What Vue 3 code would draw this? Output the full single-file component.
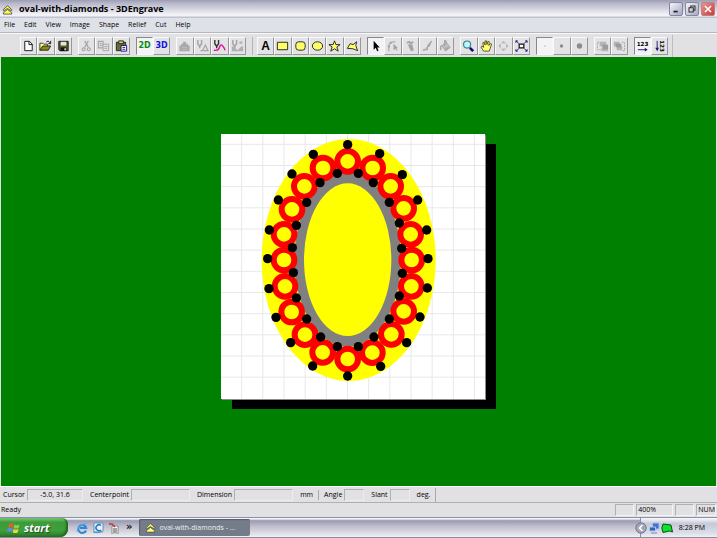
<script setup>
const menus = ['File', 'Edit', 'View', 'Image', 'Shape', 'Relief', 'Cut', 'Help']

const grayShape = 'fill="none" stroke="#a3a3a5" stroke-width="1.2"'
const probe = (c) => `<path d="M3 1v4l2 3l2-3V1M5 7v3" fill="none" stroke="${c}" stroke-width="1.5"/>`
const shape = 'fill="#ffff66" stroke="#222" stroke-width="1"'

const groups = [
  {
    size: 'w3',
    tools: [
      { label: 'New', icon: '<path d="M4 2.500h5l3 3v7H4z" fill="#fff" stroke="#111"/><path d="M8.500 2.500v3.500H12" fill="none" stroke="#111"/>' },
      { label: 'Open', icon: '<path d="M2 12V4.500h3l1 1h4V8" fill="#ffff80" stroke="#333"/><path d="M2 12l3-4.500h8.500L11 12z" fill="#8b8b10" stroke="#222"/><path d="M9 3q2-2 3.500 1M13.500 2v3h-2.500" fill="none" stroke="#111"/>' },
      { label: 'Save', icon: '<path d="M3 2.500h10v10H4l-1-1z" fill="#5c5c28" stroke="#111"/><path d="M5 3h6v4H5z" fill="#e4e4e4"/><path d="M5 9h6v4H5z" fill="#111"/><path d="M9 10h1.500v2H9z" fill="#eee"/>' },
    ],
  },
  {
    size: 'w3',
    tools: [
      { label: 'Cut', icon: `<path d="M6 2l4 7M10 2L6 9" ${grayShape}/><circle cx="5" cy="11" r="1.600" ${grayShape}/><circle cx="10.500" cy="11" r="1.600" ${grayShape}/>` },
      { label: 'Copy', icon: `<path d="M2.500 2.500h5v7h-5zM4 5h2M4 7h2" ${grayShape}/><path d="M7.500 5.500h6v7h-6z" fill="#e2e2e4" stroke="#a3a3a5"/><path d="M9 8h3M9 10h3" stroke="#a3a3a5"/>` },
      { label: 'Paste', icon: '<path d="M2.500 3.500h10v9h-10z" fill="#6b6b32" stroke="#222"/><path d="M5 2h5v3H5z" fill="#ddd45a" stroke="#222"/><path d="M7.500 7h6v6h-6z" fill="#fff" stroke="#14147c"/><path d="M9 9h3M9 11h3" stroke="#14147c"/>' },
    ],
  },
  {
    size: 'w2',
    tools: [
      { label: '2D view', text: '2D', tone: 'green', on: true },
      { label: '3D view', text: '3D', tone: 'blue' },
    ],
  },
  {
    size: 'w4',
    tools: [
      { label: 'Toolpath setup', icon: '<path d="M2.500 7h2V5h2V3h3v2h2v2h2v6h-11z" fill="#a8a8aa"/><path d="M5 9h6M5 11h6" stroke="#bdbdbf"/>' },
      { label: 'Cutter', icon: `${probe('#a3a3a5')}<path d="M6 12.500h2l3-6l3 6h-5" ${grayShape}/>` },
      { label: 'Engrave path', icon: `${probe('#333')}<path d="M2 12q5 1 6-3t3-2t3 5" fill="none" stroke="#e0149c" stroke-width="1.500"/>` },
      { label: 'Cut output', icon: `${probe('#a3a3a5')}<path d="M2 8h2l4 4l4-4h2v5H2z" fill="#b0b0b2"/><path d="M9 4l4-2v4z" fill="#b4b4b6"/>` },
    ],
  },
  {
    size: 'w6',
    rule: true,
    tools: [
      { label: 'Text', text: 'A', tone: 'letter' },
      { label: 'Rectangle', icon: `<path d="M2.500 3.500h11v8h-11z" ${shape}/>` },
      { label: 'Rounded rectangle', icon: `<rect x="3" y="3" width="10" height="9" rx="3" ${shape}/>` },
      { label: 'Ellipse', icon: `<ellipse cx="8" cy="7.500" rx="5.500" ry="4.500" ${shape}/>` },
      { label: 'Star', icon: `<path d="M8 2l1.500 4H14l-3.500 2.500L12 13L8 10.500L4 13l1.500-4.500L2 6h4.500z" ${shape}/>` },
      { label: 'Polygon', icon: `<path d="M2.500 10l3-5l3 1l4-3l-1 4l2 5.500l-5-2z" ${shape}/>` },
    ],
  },
  {
    size: 'w5',
    tools: [
      { label: 'Select', on: true, icon: '<path d="M6 2v9.500l2.200-2l1.600 3.500l1.500-.800L9.800 9H12.500z" fill="#000"/>' },
      { label: 'Edit nodes', icon: `<path d="M3 13V8q0-5 7-5" ${grayShape}/><path d="M2 7h2v2H2zM4 3h2v2H4z" fill="#a3a3a5"/><path d="M8 5v7l2-1.500l1 2l1-.5l-1-2h2z" fill="#a3a3a5"/>` },
      { label: 'Knife', icon: '<path d="M4 4l3-1l1 2l3-2" fill="none" stroke="#a3a3a5" stroke-width="1.800"/><path d="M5 6h5l1.500 6l-3 1z" fill="#a3a3a5"/>' },
      { label: 'Brush', icon: '<path d="M12.500 2L8 7l1.500 1.500z" fill="#a3a3a5" stroke="#a3a3a5"/><path d="M8 8l-2 3l-3 1l5-.5z" fill="#c6c6c8" stroke="#a3a3a5"/>' },
      { label: 'Fill', icon: '<path d="M4 7l5-3l4 5l-5 4z" fill="#c0c0c2" stroke="#a3a3a5"/><path d="M7 8V2q2-1 2 3M4 7q-2 1-1 5" fill="none" stroke="#a3a3a5" stroke-width="1.400"/><path d="M8 9l4 0l-4 3z" fill="#a3a3a5"/>' },
    ],
  },
  {
    size: 'w4',
    tools: [
      { label: 'Zoom', icon: '<path d="M9.500 9.500l3.500 3.500" stroke="#10106c" stroke-width="3"/><circle cx="6.500" cy="6" r="3.800" fill="#b8f8fc" stroke="#3c7c88" stroke-width="1.200"/>' },
      { label: 'Pan', icon: '<path d="M5 13L2 8.500l1-1l2 1.500L4 4l1.500-.5l1 3L6.500 2H8l.5 4L9.500 2.500l1.500.5l-.5 4l1.500-2l1.500.5L12 10l-1 3z" fill="#ffff70" stroke="#44441c" stroke-width=".9"/>' },
      { label: 'Rotate view', icon: '<path d="M8 2l2 2.500H6zM8 13l2-2.500H6zM2.500 7.500l2.500-2v4zM13.500 7.500l-2.500-2v4z" fill="#b4b4b6"/><circle cx="8" cy="7.500" r="3.800" fill="none" stroke="#b4b4b6" stroke-dasharray="2 1"/>' },
      { label: 'Zoom to fit', icon: '<path d="M5.500 5.500h5v4h-5z" fill="#fff" stroke="#111" stroke-width="1.300"/><path d="M2 2l3 2.500M14 2l-3 2.500M2 13l3-2.500M14 13l-3-2.500" stroke="#16167c"/><path d="M2 4V2h2M12 2h2v2M14 11v2h-2M4 13H2v-2" fill="none" stroke="#16167c"/>' },
    ],
  },
  {
    size: 'w3',
    tools: [
      { label: 'Fine', on: true, icon: '<path d="M8 7h1v1H8z" fill="#888"/>' },
      { label: 'Medium', icon: '<circle cx="8" cy="7.500" r="1.800" fill="#8c8c8e"/>' },
      { label: 'Coarse', icon: '<circle cx="8" cy="7.500" r="2.900" fill="#8c8c8e"/>' },
    ],
  },
  {
    size: 'w2',
    tools: [
      { label: 'Bring to front', icon: '<path d="M4.500 3.500H2.500v8H7" fill="none" stroke="#a3a3a5" stroke-dasharray="2 1"/><path d="M5 3h7v5H5zM7 9h7v4H7z" fill="#b4b4b6"/><path d="M8 6h6v5H8z" fill="#9c9c9e"/>' },
      { label: 'Send to back', icon: '<path d="M2 3h6v5H2zM5 8h6v4H5z" fill="#b4b4b6"/><path d="M4 5h6v4H4z" fill="#9c9c9e"/><path d="M10.500 3.500h3v9h-3" fill="none" stroke="#a3a3a5" stroke-dasharray="2 1"/>' },
    ],
  },
  {
    size: 'w2',
    tools: [
      { label: 'Horizontal order', on: true, icon: '<text x="8" y="7.500" text-anchor="middle" font-size="6" font-weight="700">123</text><path d="M3 11.500h9" stroke="#14147c"/><path d="M10.500 9.500l3 2l-3 2z" fill="#14147c"/>' },
      { label: 'Vertical order', icon: '<path d="M5.500 2v8" stroke="#14148c"/><path d="M3.500 9.500h4l-2 3.500z" fill="#14148c"/><text transform="translate(9 7.500) rotate(90)" text-anchor="middle" font-size="6" font-weight="700">123</text>' },
    ],
  },
]

const gridLines = Array.from({ length: 12 }, (_, i) => 62 + i * 63.5)
const rowLines = Array.from({ length: 12 }, (_, i) => 31 + i * 63.5)

const rings = [
  [380, 82], [306, 102], [250, 157], [213, 226], [189, 301], [189, 378], [192, 457], [212, 534],
  [252, 602], [305, 655], [380, 675], [455, 102], [509, 157], [548, 223], [569, 301], [572, 378],
  [571, 457], [548, 532], [511, 601], [454, 656],
]
const beads = [
  [380, 32], [277, 61], [213, 120], [172, 198], [145, 288], [140, 374], [144, 464], [165, 550],
  [209, 626], [275, 696], [380, 726], [476, 59], [544, 122], [590, 198], [617, 288], [621, 374],
  [619, 462], [597, 549], [557, 626], [479, 697],
  [349, 118], [412, 118], [297, 146], [257, 205], [226, 274], [214, 341], [217, 416], [226, 492],
  [257, 555], [299, 609], [349, 638], [412, 638], [457, 146], [505, 205], [535, 267], [542, 343],
  [544, 418], [535, 486], [505, 555], [459, 609],
]
</script>

<template>
  <div class="window">
    <header class="titlebar">
      <svg class="logo" viewBox="0 0 12 12" aria-hidden="true">
        <path d="M1.500 6L6 2l4.500 4v1.500L6 5L1.500 7.500z" fill="#ffff50" stroke="#333" stroke-width=".8" />
        <path d="M1.500 9.500L6 6l4.500 3.500v1.500h-9z" fill="#ffff50" stroke="#333" stroke-width=".8" />
      </svg>
      <h1>oval-with-diamonds - 3DEngrave</h1>
      <div class="controls">
        <button aria-label="Minimize"><svg viewBox="0 0 14 14"><path d="M4 10h5" stroke="#222" stroke-width="2" /></svg></button>
        <button aria-label="Restore"><svg viewBox="0 0 14 14"><path d="M5.500 5V3.500h5v5H9M3.500 5.500h5v5h-5z" fill="none" stroke="#333" stroke-width="1.200" /></svg></button>
        <button class="close" aria-label="Close"><svg viewBox="0 0 14 14"><path d="M3.500 3.500l7 7M10.500 3.500l-7 7" stroke="#fff" stroke-width="1.800" /></svg></button>
      </div>
    </header>

    <nav class="menubar">
      <button v-for="m in menus" :key="m">{{ m }}</button>
    </nav>

    <div class="toolbar">
      <div v-for="(g, i) in groups" :key="i" class="group" :class="[g.size, { rule: g.rule }]">
        <button v-for="t in g.tools" :key="t.label" :aria-label="t.label" :class="{ on: t.on }">
          <span v-if="t.text" :class="t.tone">{{ t.text }}</span>
          <svg v-else viewBox="0 0 16 15" v-html="t.icon"></svg>
        </button>
      </div>
      <i class="end"></i>
    </div>

    <main class="workspace">
      <div class="paper">
        <svg viewBox="0 0 792 795" role="img" aria-label="Oval with diamonds">
          <g stroke="#e8e8e8" stroke-width="3">
            <line v-for="x in gridLines" :key="'x' + x" :x1="x" :x2="x" y1="0" y2="795" />
            <line v-for="y in rowLines" :key="'y' + y" :y1="y" :y2="y" x1="0" x2="792" />
          </g>
          <ellipse cx="383" cy="378" rx="261" ry="363" fill="#ff0" />
          <ellipse cx="380" cy="377" rx="160" ry="261" fill="#808080" />
          <ellipse cx="380" cy="377" rx="131" ry="229" fill="#ff0" />
          <circle v-for="(r, i) in rings" :key="'r' + i" :cx="r[0]" :cy="r[1]" r="31" fill="#ff0" stroke="#f00" stroke-width="18" />
          <circle v-for="(b, i) in beads" :key="'b' + i" :cx="b[0]" :cy="b[1]" r="14" />
        </svg>
      </div>
    </main>

    <form class="readout">
      <label for="cursor">Cursor</label><input id="cursor" class="f-cursor" value="-5.0, 31.6" readonly />
      <label for="center">Centerpoint</label><input id="center" class="f-wide" readonly />
      <label for="dimension">Dimension</label><input id="dimension" class="f-wide" readonly />
      <span class="unit">mm</span>
      <label class="ruled" for="angle">Angle</label><input id="angle" class="f-small" readonly />
      <label for="slant">Slant</label><input id="slant" class="f-small" readonly />
      <span class="unit last">deg.</span>
    </form>

    <footer class="status">
      <span class="ready">Ready</span>
      <span class="cell"></span>
      <span class="cell zoom">400%</span>
      <span class="cell"></span>
      <span class="cell">NUM</span>
    </footer>

    <div class="taskbar">
      <button class="start">
        <svg viewBox="0 0 14 14" aria-hidden="true">
          <path d="M2 3q2-1.500 4.500 0L6 6.500Q4 5 1.200 6.500z" fill="#f0582c" />
          <path d="M7.500 3.500q2.500 1.300 5 0L11.700 7Q9 8.200 6.800 7z" fill="#8cd04c" />
          <path d="M1 7.500q2.500-1.500 4.800 0L5 11Q3 9.500 0 11z" fill="#5c8cf0" />
          <path d="M6.500 8q2.500 1.300 5 0l-.8 3.500Q8 12.700 5.800 11.500z" fill="#fcd030" />
        </svg>
        <span>start</span>
      </button>
      <div class="quick">
        <button aria-label="Internet Explorer">
          <svg viewBox="0 0 12 12"><path d="M10 8.500A4 4 0 1 1 10.200 6H4" fill="none" stroke="#2c88d8" stroke-width="2" /><path d="M1 10Q0 7 5 3.500T11 2" fill="none" stroke="#64b0e8" /></svg>
        </button>
        <button aria-label="Outlook Express">
          <svg viewBox="0 0 12 12"><rect x="2" y="1" width="9" height="9" rx="1" fill="#e8f4fc" stroke="#6090b8" /><path d="M9 3.500A3 3 0 1 0 9 8" fill="none" stroke="#2878c8" stroke-width="1.500" /><path d="M1 10q5 2 9-1" fill="none" stroke="#4890d0" /></svg>
        </button>
        <button aria-label="Card game">
          <svg viewBox="0 0 12 12"><path d="M4 4h6v8H4z" fill="#fff" stroke="#777" stroke-width=".8" /><path d="M1 2h3l3 3" fill="none" stroke="#c03434" stroke-width="1.600" /><path d="M6 6v5M8 6v5" stroke="#444" /></svg>
        </button>
        <span class="more">»</span>
      </div>
      <button class="task">
        <svg viewBox="0 0 12 12" aria-hidden="true">
          <path d="M1.500 6L6 2l4.500 4v1.500L6 5L1.500 7.500z" fill="#ffff80" stroke="#333" stroke-width=".6" />
          <path d="M1.500 9.500L6 6l4.500 3.500v1.500h-9z" fill="#ffff80" stroke="#333" stroke-width=".6" />
        </svg>
        <span>oval-with-diamonds - ...</span>
      </button>
      <div class="tray">
        <button class="expand" aria-label="Show hidden icons"><svg viewBox="0 0 12 12"><circle cx="6" cy="6" r="5.200" fill="#a4a6b8" stroke="#74788c" /><path d="M7.500 3L4.500 6l3 3" fill="none" stroke="#fff" stroke-width="1.600" /></svg></button>
        <svg viewBox="0 0 12 12" aria-hidden="true"><path d="M4.500 1h6.500v6H4.500z" fill="#3c74d0" stroke="#a8c0e4" /><path d="M1.500 5h6v4h-6z" fill="#2c64c0" stroke="#b4c8e4" /><path d="M3 11h6" stroke="#7890b8" /></svg>
        <svg viewBox="0 0 12 12" aria-hidden="true"><path d="M2 2l8 1l1.500 7l-3-1L2 10.500L.800 6z" fill="#08e428" stroke="#124c18" /></svg>
        <time>8:28 PM</time>
      </div>
    </div>
  </div>
</template>

<style>
body { margin: 0; }
</style>

<style scoped>
.window {
  display: flex;
  flex-direction: column;
  min-height: 100vh;
  background: #e1e1e3;
  color: #000;
  font-family: "Open Sans", "Noto Sans", sans-serif;
  font-size: 7px;
  line-height: 10px;
}
button, input {
  margin: 0;
  padding: 0;
  border: 0;
  border-radius: 0;
  background: none;
  color: inherit;
  font: inherit;
  box-sizing: border-box;
}
svg { display: block; flex: none; }

.titlebar {
  display: flex;
  align-items: center;
  height: 18px;
  padding: 0 2px;
  background: linear-gradient(#9c9cb4, #b9b9cb 20%, #d4d4df 50%, #f6f6fa 85%, #b4b6c8);
}
.logo { width: 11px; height: 11px; margin-right: 6px; }
h1 {
  flex: 1;
  margin: 0;
  font-size: 9px;
  font-weight: 700;
  line-height: 14px;
}
.controls { display: flex; gap: 2px; }
.controls button {
  width: 14px;
  height: 14px;
  border: 1px solid #8486a0;
  border-radius: 2px;
  background: linear-gradient(135deg, #f4f4fa, #a6a8c0);
}
.controls svg { width: 12px; height: 12px; }
.controls .close { border-color: #c08088; background: linear-gradient(135deg, #e89490, #c83c3c); }

.menubar {
  display: flex;
  gap: 9px;
  height: 14px;
  padding: 0 4px;
  background: #dfe1e9;
  border-bottom: 1px solid #b6b8c0;
}

.toolbar {
  display: flex;
  align-items: center;
  gap: 6px;
  height: 24px;
  padding-left: 14px;
  border-top: 1px solid #f8f8f8;
  box-sizing: border-box;
}
.toolbar::before { content: ""; width: 0; }
.group { display: grid; grid-auto-flow: column; grid-auto-columns: 1fr; height: 18px; }
.w2 { width: 34px; }
.w3 { width: 52px; }
.w4 { width: 70px; }
.w5 { width: 87px; }
.w6 { width: 104px; }
.group.rule { padding-left: 4px; border-left: 1px solid #b4b4b6; }
.group button {
  display: flex;
  align-items: center;
  justify-content: center;
  min-width: 0;
  background: #e3e3e5;
  border: 1px solid;
  border-color: #fafafa #98989a #98989a #fafafa;
}
.group button.on { background: #f3f3f5; border-color: #88888a #f6f6f6 #f6f6f6 #88888a; }
.group svg { width: 15px; height: 14px; font-family: "DejaVu Sans", sans-serif; }
.green, .blue { font: 700 8px/14px "DejaVu Sans", sans-serif; }
.green { color: #0a8a14; }
.blue { color: #1414e0; }
.letter { font: 700 12px/14px "Liberation Sans", sans-serif; color: #000; }
.end { width: 1px; height: 22px; margin-left: -2px; background: #bcbcbe; }

.workspace {
  flex: 1;
  display: flex;
  align-items: center;
  justify-content: center;
  min-height: 290px;
  margin: 0 1px;
  background: #008000;
}
.paper {
  width: 264px;
  margin: 0 11px 10px 0;
  background: #fff;
  box-shadow: 1px 1px 0 #8c8c8c, 11px 10px 0 #000;
}
.paper svg { width: 100%; }

.readout {
  display: flex;
  align-items: center;
  height: 17px;
  margin: 0;
  padding-left: 3px;
  border-top: 1px solid #fff;
  border-bottom: 1px solid #b0b0b2;
  box-sizing: border-box;
}
.readout label { margin-right: 2px; }
.readout input {
  height: 12px;
  margin-right: 7px;
  border: 1px solid;
  border-color: #b0b0b2 #ededef #ededef #b0b0b2;
  text-align: center;
}
.f-cursor { width: 56px; }
.f-wide { width: 59px; }
.f-small { width: 20px; }
.unit { padding-right: 5px; }
.ruled { padding-left: 5px; border-left: 1px solid #a8a8aa; }
.last { border-right: 1px solid #a8a8aa; line-height: 14px; }

.status { display: flex; align-items: center; gap: 2px; height: 14px; padding: 0 1px; }
.ready { flex: 1; }
.cell {
  min-width: 19px;
  height: 12px;
  padding-left: 1px;
  border: 1px solid;
  border-color: #b0b0b2 #f4f4f6 #f4f4f6 #b0b0b2;
  box-sizing: border-box;
}
.zoom { width: 37px; }

.taskbar {
  display: flex;
  align-items: center;
  height: 21px;
  border-top: 1px solid #8a90a8;
  border-bottom: 1px solid #8a8ea0;
  box-sizing: border-box;
  background: linear-gradient(#f4f4fa 0 5%, #9a9ab2 14%, #c0c0ce 45%, #e6e6ea 90%, #f4f4f4);
}
.start {
  display: flex;
  align-items: center;
  gap: 3px;
  width: 68px;
  height: 19px;
  padding-left: 7px;
  border-radius: 0 6px 8px 0;
  background: linear-gradient(#7cc878, #3d9c3a 22%, #3f9f3a 65%, #2a7a28);
  box-shadow: inset -2px -1px 2px #1f6a20;
  color: #fff;
  font: italic 700 11px/16px "Open Sans", sans-serif;
  text-shadow: 1px 1px 1px #1c4c1c;
}
.start svg { width: 14px; height: 14px; }
.quick { display: flex; align-items: center; gap: 4px; padding: 0 7px 0 8px; }
.quick svg { width: 12px; height: 12px; }
.more { align-self: flex-start; padding-left: 2px; font: 700 10px/10px "DejaVu Sans", sans-serif; color: #111; }
.task {
  display: flex;
  align-items: center;
  gap: 3px;
  width: 111px;
  height: 17px;
  padding-left: 6px;
  border-radius: 2px;
  background: #747c8a;
  box-shadow: inset 1px 1px 1px #565e6e;
  color: #f0f0f4;
}
.task svg { width: 11px; height: 11px; }
.tray {
  display: flex;
  align-items: center;
  gap: 1px;
  height: 19px;
  margin-left: auto;
  padding-right: 12px;
  border-left: 1px solid #8a8ea4;
  background: linear-gradient(#fafafc, #c6c8d8 30%, #dcdee8 80%, #f0f0f4);
}
.expand { margin-left: -6px; }
.tray svg { width: 12px; height: 12px; }
time { margin-left: 5px; }
</style>
